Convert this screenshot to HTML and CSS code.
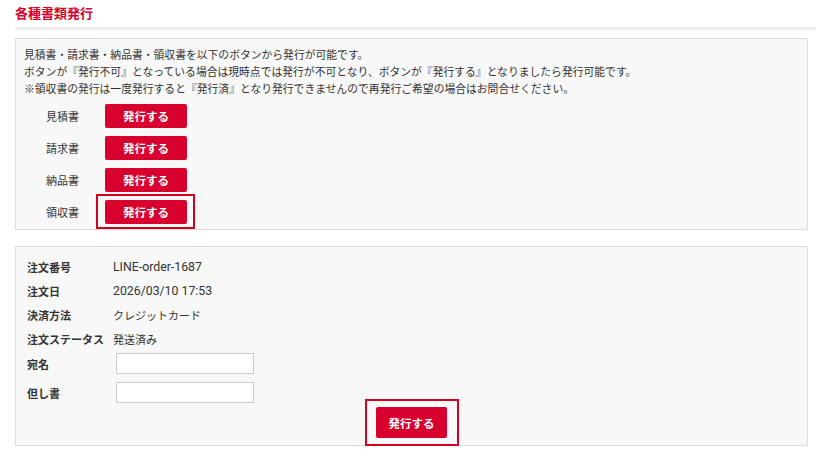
FILE: index.html
```html
<!DOCTYPE html>
<html lang="ja">
<head>
<meta charset="utf-8">
<title>各種書類発行</title>
<link rel="stylesheet" href="styles.css">
</head>
<body>
<div class="page">
  <h2 class="title">各種書類発行</h2>
  <div class="box box-docs">
    <p class="note">見積書・請求書・納品書・領収書を以下のボタンから発行が可能です。<br>ボタンが『発行不可』となっている場合は現時点では発行が不可となり、ボタンが『発行する』となりましたら発行可能です。<br>※領収書の発行は一度発行すると『発行済』となり発行できませんので再発行ご希望の場合はお問合せください。</p>
    <div class="doc-list">
      <div class="doc-row"><span class="doc-label">見積書</span><button class="btn">発行する</button></div>
      <div class="doc-row"><span class="doc-label">請求書</span><button class="btn">発行する</button></div>
      <div class="doc-row"><span class="doc-label">納品書</span><button class="btn">発行する</button></div>
      <div class="doc-row"><span class="doc-label">領収書</span><span class="hl hl-small"><button class="btn">発行する</button></span></div>
    </div>
  </div>
  <div class="box box-order">
    <div class="info-row"><span class="info-label">注文番号</span><span class="info-value latin">LINE-order-1687</span></div>
    <div class="info-row"><span class="info-label">注文日</span><span class="info-value latin">2026/03/10 17:53</span></div>
    <div class="info-row"><span class="info-label">決済方法</span><span class="info-value">クレジットカード</span></div>
    <div class="info-row"><span class="info-label">注文ステータス</span><span class="info-value">発送済み</span></div>
    <div class="input-row first"><span class="info-label">宛名</span><input class="field" type="text"></div>
    <div class="input-row"><span class="info-label">但し書</span><input class="field" type="text"></div>
    <div class="submit-row"><span class="hl hl-big"><button class="btn btn-big">発行する</button></span></div>
  </div>
</div>
</body>
</html>
```
FILE: styles.css
```css
* { box-sizing: border-box; }
html, body { margin: 0; padding: 0; background: #fff; }
body {
  font-family: "Noto Sans CJK JP", "Noto Sans", sans-serif;
  color: #333;
  font-size: 11px;
}
.page {
  width: 801px;
  margin-left: 15px;
}
.title {
  margin: 0;
  padding-top: 4px;
  font-size: 13px;
  font-weight: bold;
  line-height: 18px;
  color: #d8002c;
  border-bottom: 3px solid #eeeeee;
  height: 30px;
}
.box {
  width: 793px;
  background: #f8f8f8;
  border: 1px solid #dddddd;
}
.box-docs {
  margin-top: 8px;
  padding: 7px 8px 6px 8px;
  height: 192px;
}
.note {
  margin: 0;
  line-height: 17px;
  font-size: 10.8px;
  color: #333;
}
.doc-list {
  display: flex;
  flex-direction: column;
  gap: 8px;
  margin-top: 7px;
  padding-left: 22px;
}
.doc-row {
  display: flex;
  align-items: center;
  height: 24px;
}
.doc-label {
  width: 59px;
  font-size: 11px;
  color: #333;
}
.btn {
  font-family: inherit;
  border: none;
  border-radius: 2px;
  background: #d8002c;
  color: #fff;
  font-weight: bold;
  font-size: 11.5px;
  width: 82px;
  height: 24px;
  padding: 0;
  cursor: pointer;
}
.btn-big {
  width: 71px;
  height: 31px;
}
.hl {
  position: relative;
  display: inline-flex;
}
.hl::after {
  content: "";
  position: absolute;
  border: 2px solid #d4001f;
  pointer-events: none;
}
.hl-small::after { inset: -6px -8px -5px -9px; }
.hl-big::after { inset: -8px -12px -8px -11px; }
.box-order {
  margin-top: 16px;
  padding: 8px 11px 7px 11px;
  height: 200px;
}
.info-row, .input-row {
  display: flex;
  align-items: center;
  height: 24px;
}
.info-label {
  width: 86px;
  font-weight: bold;
  color: #333;
}
.latin {
  font-family: Roboto, "Noto Sans CJK JP", sans-serif;
  font-size: 12.3px;
}
.input-row { height: 21px; margin-top: 8px; }
.input-row.first { margin-top: 2px; }
.field {
  margin-left: 3px;
  width: 138px;
  height: 21px;
  border: 1px solid #cccccc;
  background: #fff;
  padding: 0 4px;
}
.submit-row {
  display: flex;
  justify-content: center;
  margin-top: 4px;
}
```
